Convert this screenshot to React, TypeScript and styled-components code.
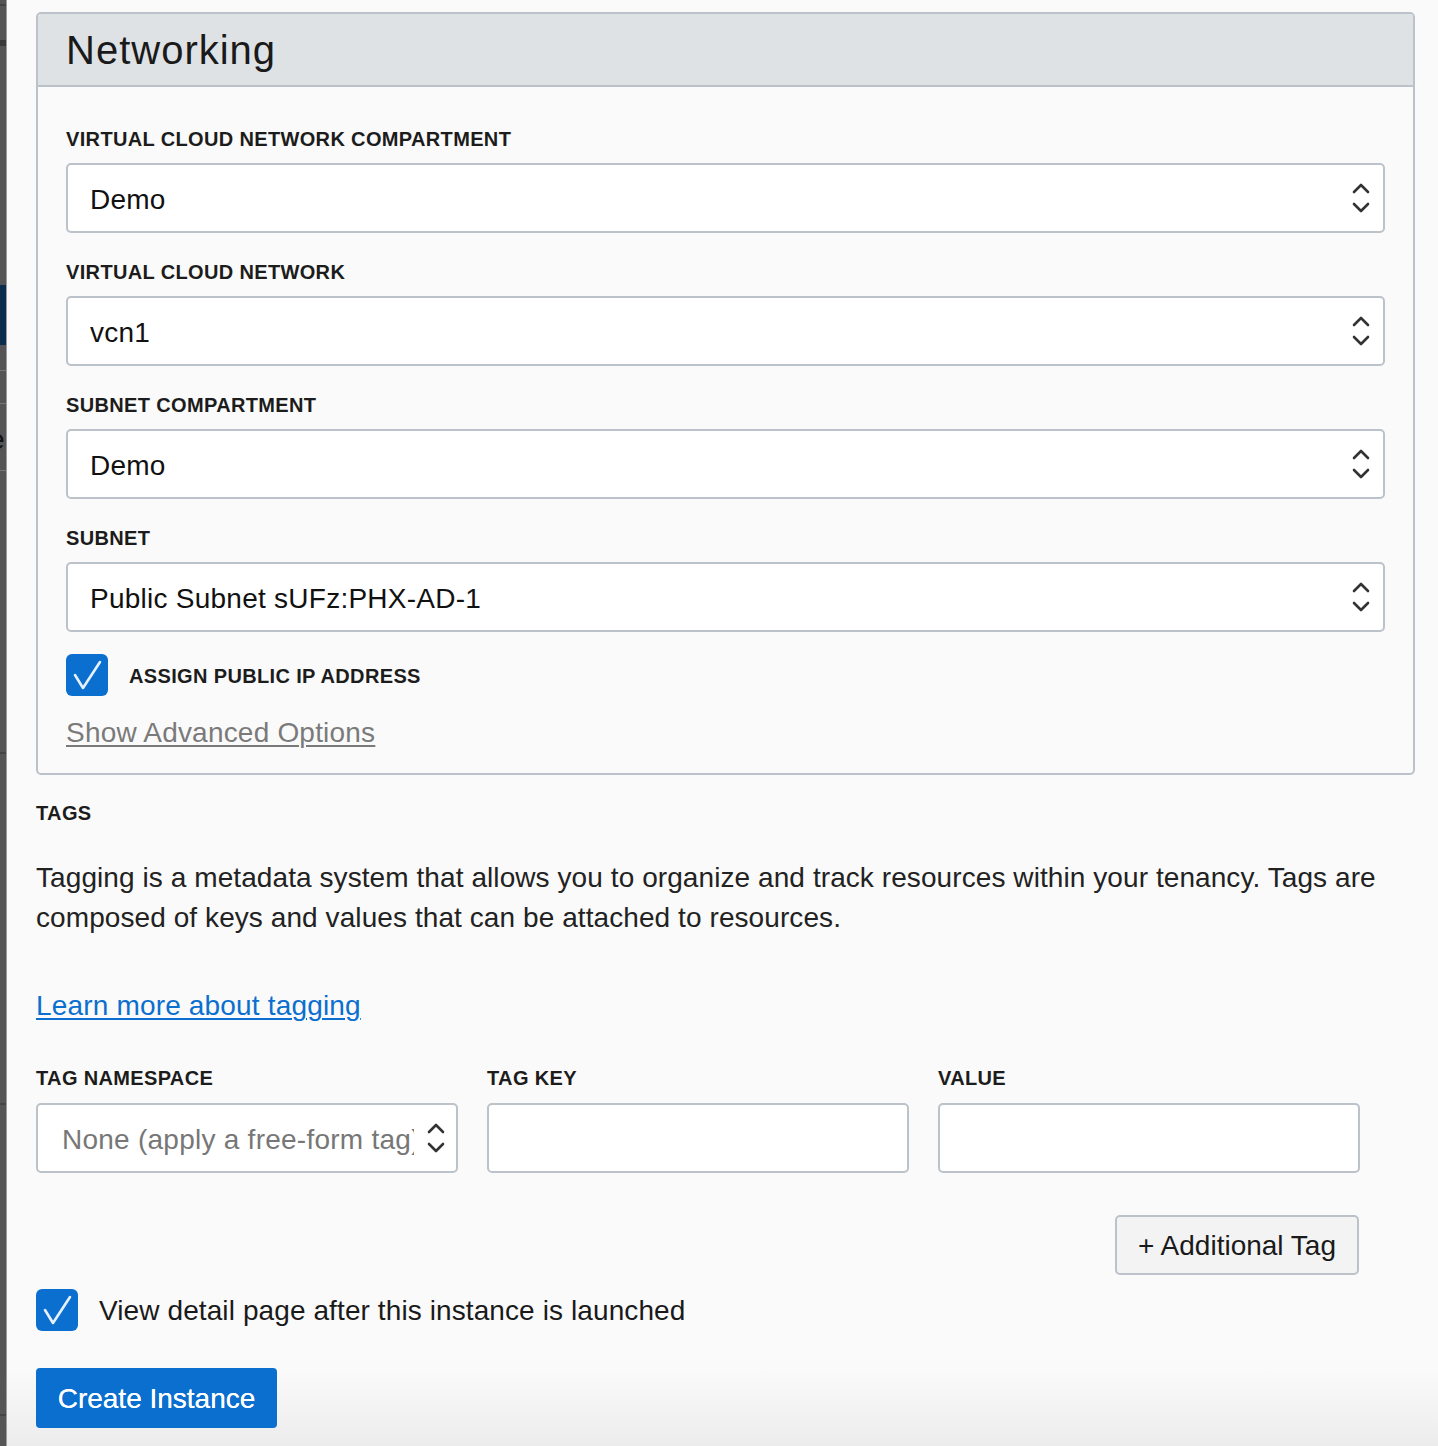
import React from 'react';
import styled, { createGlobalStyle } from 'styled-components';

const fields = [
    { label: 'VIRTUAL CLOUD NETWORK COMPARTMENT', value: 'Demo' },
    { label: 'VIRTUAL CLOUD NETWORK', value: 'vcn1' },
    { label: 'SUBNET COMPARTMENT', value: 'Demo' },
    { label: 'SUBNET', value: 'Public Subnet sUFz:PHX-AD-1' },
];

// background page peeking out on the left edge
const stripMarks = [
    { top: 4, height: 2, color: '#444' },
    { top: 40, height: 6, color: '#3a3a3a' },
    { top: 285, height: 60, color: '#0b2d4d' },
    { top: 370, height: 1, color: '#777' },
    { top: 403, height: 1, color: '#777' },
    { top: 470, height: 1, color: '#777' },
    { top: 752, height: 2, color: '#444' },
    { top: 1103, height: 2, color: '#444' },
    { top: 1414, height: 2, color: '#444' },
];

const Chevrons: React.FC = () => (
    <svg width="20" height="34" viewBox="0 0 20 34" fill="none">
        <path d="M3 11 L10 4 L17 11" stroke="#333" strokeWidth="2.6" strokeLinecap="round" strokeLinejoin="round" />
        <path d="M3 23 L10 30 L17 23" stroke="#333" strokeWidth="2.6" strokeLinecap="round" strokeLinejoin="round" />
    </svg>
);

const Check: React.FC = () => (
    <CheckBox>
        <svg width="42" height="42" viewBox="0 0 42 42" fill="none">
            <path d="M9 21 L17 34 L34 8" stroke="#e6f1ff" strokeWidth="2.6" strokeLinecap="round" strokeLinejoin="round" />
        </svg>
    </CheckBox>
);

const App: React.FC = () => {
    return (
        <>
            <GlobalStyle />
            <Root>
                <Strip>
                    {stripMarks.map((m, i) => (
                        <StripMark key={i} style={{ top: m.top, height: m.height, background: m.color }} />
                    ))}
                    <StripLetter>e</StripLetter>
                </Strip>
                <Content>
                    <Panel>
                        <PanelHeader>Networking</PanelHeader>
                        <PanelBody>
                            {fields.map(f => (
                                <Field key={f.label}>
                                    <Label>{f.label}</Label>
                                    <Select>
                                        <Clip>{f.value}</Clip>
                                        <Chevrons />
                                    </Select>
                                </Field>
                            ))}
                            <CheckRow>
                                <Check />
                                <SmallCheckLabel>ASSIGN PUBLIC IP ADDRESS</SmallCheckLabel>
                            </CheckRow>
                            <GrayLink>Show Advanced Options</GrayLink>
                        </PanelBody>
                    </Panel>

                    <SectionTitle>TAGS</SectionTitle>
                    <Paragraph>
                        Tagging is a metadata system that allows you to organize and track resources within
                        your tenancy. Tags are composed of keys and values that can be attached to resources.
                    </Paragraph>
                    <BlueLink>Learn more about tagging</BlueLink>

                    <TagGrid>
                        <TagCol>
                            <Label>TAG NAMESPACE</Label>
                            <Select muted>
                                <Clip>None (apply a free-form tag)</Clip>
                                <Chevrons />
                            </Select>
                        </TagCol>
                        <TagCol>
                            <Label>TAG KEY</Label>
                            <TextInput />
                        </TagCol>
                        <TagCol>
                            <Label>VALUE</Label>
                            <TextInput />
                        </TagCol>
                    </TagGrid>
                    <ButtonRow>
                        <SecondaryButton>+ Additional Tag</SecondaryButton>
                    </ButtonRow>

                    <ViewRow>
                        <Check />
                        <BigCheckLabel>View detail page after this instance is launched</BigCheckLabel>
                    </ViewRow>
                    <PrimaryButton>Create Instance</PrimaryButton>
                </Content>
            </Root>
        </>
    );
};

const Root = styled.div`
    display: flex;
    min-height: 1446px;
    font-family: 'Liberation Sans', Arial, sans-serif;
    color: #222;
    background: linear-gradient(to bottom, #fafafa 0, #fafafa 1370px, #ececec 1446px);

    * {
        box-sizing: border-box;
    }
`;

const Strip = styled.div`
    position: relative;
    width: 7px;
    flex: 0 0 7px;
    background: #555;
    border-right: 1px solid #9a9ca0;
    overflow: hidden;
`;

const StripMark = styled.div`
    position: absolute;
    left: 0;
    right: 0;
`;

const StripLetter = styled.div`
    position: absolute;
    top: 424px;
    left: -11px;
    font-size: 28px;
    color: #111;
`;

const Content = styled.div`
    flex: 1;
    padding: 12px 23px 0 29px;
`;

const Panel = styled.div`
    border: 2px solid #bcc2c9;
    border-radius: 5px;
    background: #fafafa;
    overflow: hidden;
`;

const PanelHeader = styled.h2`
    margin: 0;
    height: 73px;
    padding: 2px 28px 0;
    display: flex;
    align-items: center;
    background: #dfe2e5;
    border-bottom: 2px solid #bcc2c9;
    font-size: 40px;
    font-weight: normal;
    color: #1a1a1a;
    letter-spacing: 1px;
`;

const PanelBody = styled.div`
    padding: 40px 28px 23px;
`;

const Field = styled.div`
    margin-bottom: 27px;

    &:nth-of-type(4) {
        margin-bottom: 22px;
    }
`;

const Label = styled.div`
    font-size: 20px;
    line-height: 24px;
    font-weight: bold;
    color: #1c1c1c;
    letter-spacing: 0.35px;
    margin-bottom: 12px;
`;

const Select = styled.div<{ muted?: boolean }>`
    height: 70px;
    display: flex;
    align-items: center;
    gap: 12px;
    padding: 3px 12px 0 22px;
    background: #fff;
    border: 2px solid #bcc2c9;
    border-radius: 5px;
    font-size: 28px;
    letter-spacing: 0.25px;
    color: ${p => (p.muted ? '#777' : '#111')};
    overflow: hidden;

    svg {
        flex: 0 0 auto;
        margin-top: -3px;
    }
`;

const Clip = styled.span`
    white-space: nowrap;
    overflow: hidden;
    flex: 1;
`;

const TextInput = styled.div`
    height: 70px;
    background: #fff;
    border: 2px solid #bcc2c9;
    border-radius: 5px;
`;

const CheckRow = styled.div`
    display: flex;
    align-items: center;
    gap: 21px;
    height: 42px;
`;

const CheckBox = styled.div`
    width: 42px;
    height: 42px;
    flex: 0 0 42px;
    border-radius: 6px;
    background: #0a6fcf;
    display: flex;
`;

const SmallCheckLabel = styled.span`
    font-size: 20px;
    font-weight: bold;
    letter-spacing: 0.35px;
    color: #1c1c1c;
    padding-top: 2px;
`;

const GrayLink = styled.a`
    display: inline-block;
    margin-top: 20px;
    font-size: 28px;
    line-height: 34px;
    letter-spacing: 0.2px;
    color: #7a7a7a;
    text-decoration: underline;
    text-decoration-thickness: 2px;
    text-underline-offset: 3px;
`;

const SectionTitle = styled.div`
    margin-top: 26px;
    font-size: 20px;
    line-height: 24px;
    font-weight: bold;
    letter-spacing: 0.35px;
    color: #1c1c1c;
`;

const Paragraph = styled.p`
    margin: 33px 0 48px;
    font-size: 28px;
    line-height: 40px;
    letter-spacing: 0.08px;
    color: #222;
`;

const BlueLink = styled.a`
    display: block;
    font-size: 28px;
    line-height: 40px;
    letter-spacing: 0.17px;
    color: #0a6fcf;
    text-decoration: underline;
    text-decoration-thickness: 2px;
    text-underline-offset: 3px;
    margin-bottom: 40px;
`;

const TagGrid = styled.div`
    display: grid;
    grid-template-columns: repeat(3, 422px);
    column-gap: 29px;
`;

const TagCol = styled.div`
    display: flex;
    flex-direction: column;

    ${Label} {
        margin-bottom: 13px;
    }

    ${Select} {
        padding-left: 24px;
        padding-right: 10px;
    }
`;

const ButtonRow = styled.div`
    width: 1323px;
    display: flex;
    justify-content: flex-end;
    margin-top: 42px;
`;

const SecondaryButton = styled.button`
    height: 60px;
    padding: 2px 21px 0;
    background: #f3f3f4;
    border: 2px solid #bcc2c9;
    border-radius: 5px;
    font-family: inherit;
    font-size: 28px;
    color: #1a1a1a;
`;

const ViewRow = styled.div`
    display: flex;
    align-items: center;
    gap: 21px;
    margin-top: 14px;
`;

const BigCheckLabel = styled.span`
    font-size: 28px;
    letter-spacing: 0.1px;
    color: #1a1a1a;
    padding-top: 2px;
`;

const PrimaryButton = styled.button`
    display: block;
    margin-top: 37px;
    height: 60px;
    width: 241px;
    padding-top: 2px;
    background: #0a6fcf;
    border: none;
    border-radius: 4px;
    font-family: inherit;
    font-size: 28px;
    color: #fff;
    text-shadow: 0 0 0.4px #fff;
`;

const GlobalStyle = createGlobalStyle`
    body {
        margin: 0;
        background: #fafafa;
    }
`;

export default App;
